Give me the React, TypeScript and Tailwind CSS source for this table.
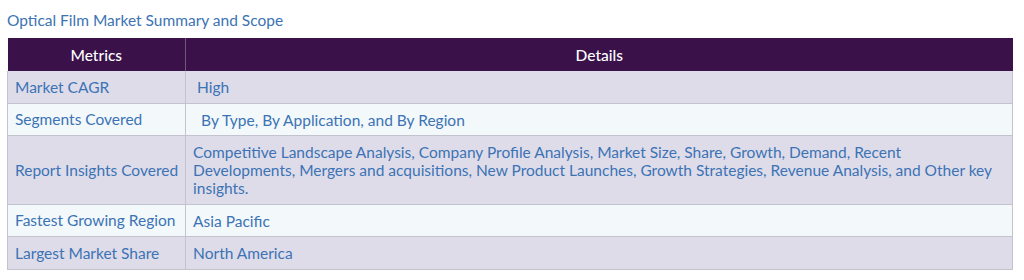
const rows: { metric: string; details: string; indent?: string }[] = [
  { metric: 'Market CAGR', details: 'High', indent: 'pl-[11px]' },
  { metric: 'Segments Covered', details: 'By Type, By Application, and By Region', indent: 'pl-[15px]' },
  {
    metric: 'Report Insights Covered',
    details:
      'Competitive Landscape Analysis, Company Profile Analysis, Market Size, Share, Growth, Demand, Recent Developments, Mergers and acquisitions, New Product Launches, Growth Strategies, Revenue Analysis, and Other key insights.',
  },
  { metric: 'Fastest Growing Region', details: 'Asia Pacific' },
  { metric: 'Largest Market Share', details: 'North America' },
]

export default function App() {
  return (
    <div className="w-[1024px] h-[280px] bg-white pl-[7px] pt-[10px] font-['Lato','Noto_Sans',sans-serif]">
      <h2 className="text-[15.5px] leading-[20px] text-[#3b73b4] mb-[8px]">
        Optical Film Market Summary and Scope
      </h2>
      <table className="w-[1006px] border-collapse text-[15.5px] leading-[18px] text-[#3b73b4]">
        <thead>
          <tr className="bg-[#3a1149] text-white h-[33px]">
            <th className="w-[178px] font-medium border-r border-[#6b5a7a]">Metrics</th>
            <th className="font-medium">Details</th>
          </tr>
        </thead>
        <tbody>
          {rows.map((r, i) => (
            <tr
              key={r.metric}
              className={`${i % 2 === 0 ? 'bg-[#dfdcea]' : 'bg-[#f3f8fb]'} border-b border-[#c4c2cf]`}
            >
              <td className="px-[7px] border-r border-[#c4c2cf] border-l whitespace-nowrap">{r.metric}</td>
              <td className={`pt-[7px] pb-[6.5px] pr-[16px] border-r border-[#c4c2cf] ${r.indent ?? 'pl-[7px]'}`}>
                {r.details}
              </td>
            </tr>
          ))}
        </tbody>
      </table>
    </div>
  )
}
